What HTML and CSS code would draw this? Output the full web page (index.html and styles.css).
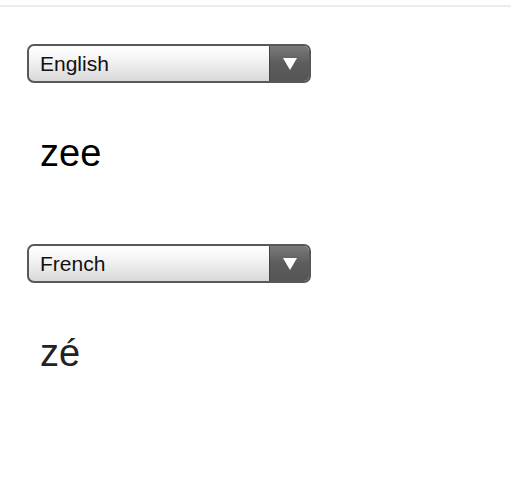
FILE: index.html
```html
<!DOCTYPE html>
<html>
<head>
<meta charset="utf-8">
<link rel="stylesheet" href="styles.css">
</head>
<body>
<div class="topbar"></div>
<main class="content">
  <section class="block">
    <div class="select">
      <span class="select-label">English</span>
      <span class="select-btn"><span class="arrow"></span></span>
    </div>
    <p class="word">zee</p>
  </section>
  <section class="block">
    <div class="select">
      <span class="select-label">French</span>
      <span class="select-btn"><span class="arrow"></span></span>
    </div>
    <p class="word word-fr">zé</p>
  </section>
</main>
</body>
</html>
```
FILE: styles.css
```css
html, body {
  margin: 0;
  padding: 0;
  background: #fff;
  font-family: "Liberation Sans", Arial, sans-serif;
}
.topbar {
  height: 5px;
  border-bottom: 2px solid #ececec;
}
.content {
  padding: 37px 0 0 27px;
}
.block {
  height: 200px;
}
.select {
  width: 280px;
  height: 35px;
  border: 2px solid #585858;
  border-radius: 7px;
  display: flex;
  overflow: hidden;
  background: linear-gradient(#ffffff, #f3f3f3 40%, #d9d9d9);
}
.select-label {
  flex: 1;
  display: flex;
  align-items: center;
  padding-left: 11px;
  font-size: 21px;
  color: #111;
  border-right: 1px solid #444;
}
.select-btn {
  width: 39px;
  display: flex;
  align-items: center;
  justify-content: center;
  background: linear-gradient(#7a7a7a, #5c5c5c 50%, #555);
}
.arrow {
  width: 0;
  height: 0;
  border-left: 7px solid transparent;
  border-right: 7px solid transparent;
  border-top: 12px solid #fff;
}
.word {
  margin: 48px 0 0 13px;
  font-size: 38px;
  line-height: 44px;
  color: #000;
}
.word-fr {
  color: #222;
}
```
